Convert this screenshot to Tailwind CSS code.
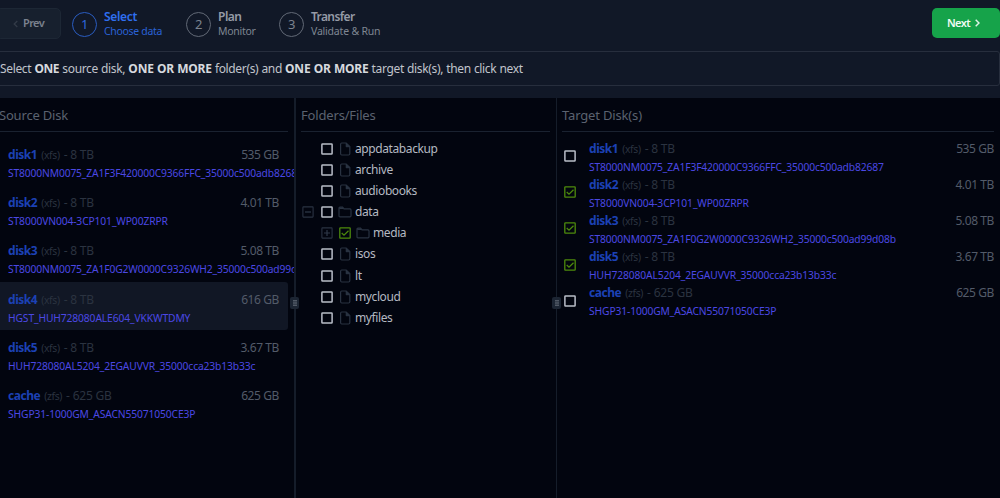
<!DOCTYPE html>
<html lang="en">
<head>
<meta charset="utf-8">
<title>Select data</title>
<script src="https://cdn.jsdelivr.net/npm/@tailwindcss/browser@4"></script>
</head>
<body class="flex h-[498px] w-[1000px] flex-col overflow-hidden bg-[#111827] font-['Noto_Sans',sans-serif] text-[12px] tracking-[-0.4px] whitespace-nowrap">
<svg class="hidden">
  <symbol id="box" viewBox="0 0 12 12"><rect x=".9" y=".9" width="10.2" height="10.2" rx=".6" fill="none" stroke="#b9bec8" stroke-width="1.5"/></symbol>
  <symbol id="checked" viewBox="0 0 12 12"><rect x=".8" y=".8" width="10.4" height="10.4" rx=".6" fill="none" stroke="#4d8a0c" stroke-width="1.3"/><path d="M2.7 6.1 5 8.2 9.5 3.8" fill="none" stroke="#4d8a0c" stroke-width="1.3"/></symbol>
  <symbol id="file" viewBox="0 0 12 14"><path d="M1.6 2.2q0-1.2 1.2-1.2H7.2L10.8 4.6V11.8q0 1.2-1.2 1.2H2.8q-1.2 0-1.2-1.2Z" fill="none" stroke="#293241" stroke-width="1.2"/><path d="M7 1V4.9H10.9Z" fill="#293241" stroke="#293241" stroke-width=".6"/></symbol>
  <symbol id="folder" viewBox="0 0 14 12"><path d="M1 2.2q0-1 1-1H4.6L6 2.9H12q1 0 1 1V9.8q0 1-1 1H2q-1 0-1-1Z" fill="none" stroke="#293241" stroke-width="1.2"/><path d="M1.2 1.4H4.6L6 3H1.2Z" fill="#293241"/></symbol>
  <symbol id="minus" viewBox="0 0 12 12"><rect x=".9" y=".9" width="10.2" height="10.2" rx=".5" fill="none" stroke="#2a3342" stroke-width="1.1"/><path d="M3 6H9" stroke="#2f3949" stroke-width="1.2"/></symbol>
  <symbol id="plus" viewBox="0 0 12 12"><rect x=".9" y=".9" width="10.2" height="10.2" rx=".5" fill="none" stroke="#2a3342" stroke-width="1.1"/><path d="M3 6H9M6 3V9" stroke="#2f3949" stroke-width="1.2"/></symbol>
</svg>

<header class="flex h-[51px] shrink-0 items-start pt-2">
  <button class="-ml-1 flex h-[31px] w-[65px] items-center rounded-[5px] border border-[#1d2735] bg-[#17202e] pl-4 text-[11px] font-semibold tracking-[-0.63px] text-[#7b828e]">
    <svg class="mr-[5px] h-2 w-[5px]" viewBox="0 0 5 8" fill="none" stroke="#333b48" stroke-width="1.3"><path d="M4.3 1 1.2 4 4.3 7"/></svg>Prev
  </button>
  <div class="ml-[11px] flex w-[114px] items-center pt-[3px]">
    <div class="flex size-[25px] items-center justify-center rounded-full border border-[#2a5cc0] text-[13px] text-[#2f68dc]">1</div>
    <div class="ml-[7px] mt-[-2px]">
      <div class="h-[15px] leading-[15px] font-semibold tracking-[-0.33px] text-[#2f6ff0]">Select</div>
      <div class="h-[14px] text-[10.5px] leading-[14px] tracking-[-0.32px] text-[#2a62d6]">Choose data</div>
    </div>
  </div>
  <div class="flex w-[93px] items-center pt-[3px]">
    <div class="flex size-[25px] items-center justify-center rounded-full border border-[#626976] text-[13px] text-[#7b828e]">2</div>
    <div class="ml-[7px] mt-[-2px]">
      <div class="h-[15px] leading-[15px] font-semibold tracking-[-0.49px] text-[#959ba6]">Plan</div>
      <div class="h-[14px] text-[10.5px] leading-[14px] tracking-[-0.28px] text-[#7f8692]">Monitor</div>
    </div>
  </div>
  <div class="flex items-center pt-[3px]">
    <div class="flex size-[25px] items-center justify-center rounded-full border border-[#626976] text-[13px] text-[#7b828e]">3</div>
    <div class="ml-[7px] mt-[-2px]">
      <div class="h-[15px] leading-[15px] font-semibold tracking-[-0.62px] text-[#959ba6]">Transfer</div>
      <div class="h-[14px] text-[10.5px] leading-[14px] tracking-[-0.2px] text-[#7f8692]">Validate &amp; Run</div>
    </div>
  </div>
  <button class="ml-auto flex h-[30px] w-[68px] items-center rounded-[5px] bg-[#16a34a] pl-[15px] text-[11px] font-semibold tracking-[-0.64px] text-[#f0fbf4]">Next<svg class="ml-[5px] h-2 w-[5px]" viewBox="0 0 5 8" fill="none" stroke="#dff3e6" stroke-width="1.5"><path d="M.7 .7 4 4 .7 7.3"/></svg></button>
</header>

<div class="-ml-2 flex h-[35px] shrink-0 items-center rounded-[3px] border border-[#272e3d] pl-2 leading-4 tracking-[-0.35px] text-[#c0c4cb] [word-spacing:0.4px]">
  <p class="-ml-px whitespace-pre">Select <b class="tracking-[-0.4px] text-[#d6d9de]">ONE</b> source disk, <b class="tracking-[-0.22px] text-[#d6d9de]">ONE OR MORE</b> folder(s) and <b class="tracking-[-0.22px] text-[#d6d9de]">ONE OR MORE</b> target disk(s), then click next</p>
</div>

<main class="mt-3 flex min-h-0 flex-1 bg-[#02050f]">
  <section class="w-[294px] shrink-0 overflow-hidden">
    <h2 class="mr-[6px] h-[34px] border-b border-[#1a2230] pt-2 text-[13px] leading-[18px] tracking-[-0.19px] text-[#5b626f]"><span class="-ml-px">Source Disk</span></h2>
    <div id="source" class="pt-[5px]"></div>
  </section>
  <div class="relative w-[2px] shrink-0 bg-[#151d2a]"><i class="absolute top-[199px] left-[-4px] flex h-3 w-[9px] items-center justify-center rounded-[2px] bg-[#1c2533]"><svg class="h-[6px] w-1" viewBox="0 0 4 6" stroke="#69717d" stroke-dasharray="1.6 .6" stroke-width="1.4"><path d="M1 0V6M3 0V6"/></svg></i></div>
  <section class="w-[260px] shrink-0 pl-[5px]">
    <h2 class="mr-[6px] h-[34px] border-b border-[#1a2230] pt-2 text-[13px] leading-[18px] tracking-[-0.17px] text-[#5b626f]">Folders/Files</h2>
    <ul id="tree" class="pt-[6.4px]"></ul>
  </section>
  <div class="relative w-px shrink-0 bg-[#151d2a]"><i class="absolute top-[199px] left-[-4px] flex h-3 w-[9px] items-center justify-center rounded-[2px] bg-[#1c2533]"><svg class="h-[6px] w-1" viewBox="0 0 4 6" stroke="#69717d" stroke-dasharray="1.6 .6" stroke-width="1.4"><path d="M1 0V6M3 0V6"/></svg></i></div>
  <section class="min-w-0 flex-1 pr-[6px] pl-[5px]">
    <h2 class="h-[34px] border-b border-[#1a2230] pt-2 text-[13px] leading-[18px] tracking-[-0.16px] text-[#5b626f]">Target Disk(s)</h2>
    <div id="target" class="pt-[6px]"></div>
  </section>
</main>

<script>
const disks = [
  ['disk1', 'xfs', '8 TB', '535 GB', 'ST8000NM0075_ZA1F3F420000C9366FFC_35000c500adb82687', false],
  ['disk2', 'xfs', '8 TB', '4.01 TB', 'ST8000VN004-3CP101_WP00ZRPR', true],
  ['disk3', 'xfs', '8 TB', '5.08 TB', 'ST8000NM0075_ZA1F0G2W0000C9326WH2_35000c500ad99d08b', true],
  ['disk4', 'xfs', '8 TB', '616 GB', 'HGST_HUH728080ALE604_VKKWTDMY', false],
  ['disk5', 'xfs', '8 TB', '3.67 TB', 'HUH728080AL5204_2EGAUVVR_35000cca23b13b33c', true],
  ['cache', 'zfs', '625 GB', '625 GB', 'SHGP31-1000GM_ASACN55071050CE3P', false],
];
const details = ([name, fs, size, free, id]) => `
  <div class="flex h-[18px] items-baseline leading-[18px]">
    <b class="tracking-[-0.45px] text-[#1c41b5]">${name}</b>
    <span class="ml-1 text-[10.3px] tracking-[-0.35px] text-[#2b3340]">(${fs})</span>
    <span class="ml-1 tracking-[-0.2px] text-[#2b3340]">- ${size}</span>
    <span class="ml-auto text-[#535b69]">${free}</span>
  </div>
  <div class="h-[18px] text-[10.3px] leading-[18px] ${id.length > 50 ? 'tracking-[-0.15px]' : 'tracking-[-0.13px]'} text-[#4b48e4]">${id}</div>`;
document.getElementById('source').innerHTML = disks.map(d => `
  <div class="mr-[6px] h-[48.2px] rounded-r-[3px] pt-[9px] pr-[9px] pl-2 ${d[0] === 'disk4' ? 'bg-[#111725]' : ''}">${details(d)}</div>`).join('');
document.getElementById('target').innerHTML = disks.filter(d => d[0] !== 'disk4').map(d => `
  <div class="flex h-[36.2px] items-start">
    <svg class="mt-[12px] ml-[1.5px] size-3 shrink-0"><use href="#${d[5] ? 'checked' : 'box'}"/></svg>
    <div class="ml-[13.5px] min-w-0 flex-1 pt-[1.5px]">${details(d)}</div>
  </div>`).join('');
const icon = {
  box: '<svg class="ml-[6px] size-3"><use href="#box"/></svg>',
  checked: '<svg class="ml-[6px] size-3"><use href="#checked"/></svg>',
  file: '<svg class="ml-[6px] mr-[4px] h-[14px] w-3"><use href="#file"/></svg>',
  folder: '<svg class="ml-[5px] mr-[3px] h-3 w-[14px]"><use href="#folder"/></svg>',
  none: '<span class="ml-[2px] w-3"></span>',
  minus: '<svg class="ml-[1px] mr-px size-3"><use href="#minus"/></svg>',
  plus: '<svg class="ml-[20px] size-3"><use href="#plus"/></svg>',
};
document.getElementById('tree').innerHTML = [
  ['none', 'box', 'file', 'appdatabackup'], ['none', 'box', 'file', 'archive'], ['none', 'box', 'file', 'audiobooks'],
  ['minus', 'box', 'folder', 'data'], ['plus', 'checked', 'folder', 'media'], ['none', 'box', 'file', 'isos'],
  ['none', 'box', 'file', 'lt'], ['none', 'box', 'file', 'mycloud'], ['none', 'box', 'file', 'myfiles'],
].map(([a, b, c, name]) => `<li class="flex h-[21.1px] items-center text-[#b4b9c2]">${icon[a]}${icon[b]}${icon[c]}<span class="leading-4">${name}</span></li>`).join('');
</script>
</body>
</html>
